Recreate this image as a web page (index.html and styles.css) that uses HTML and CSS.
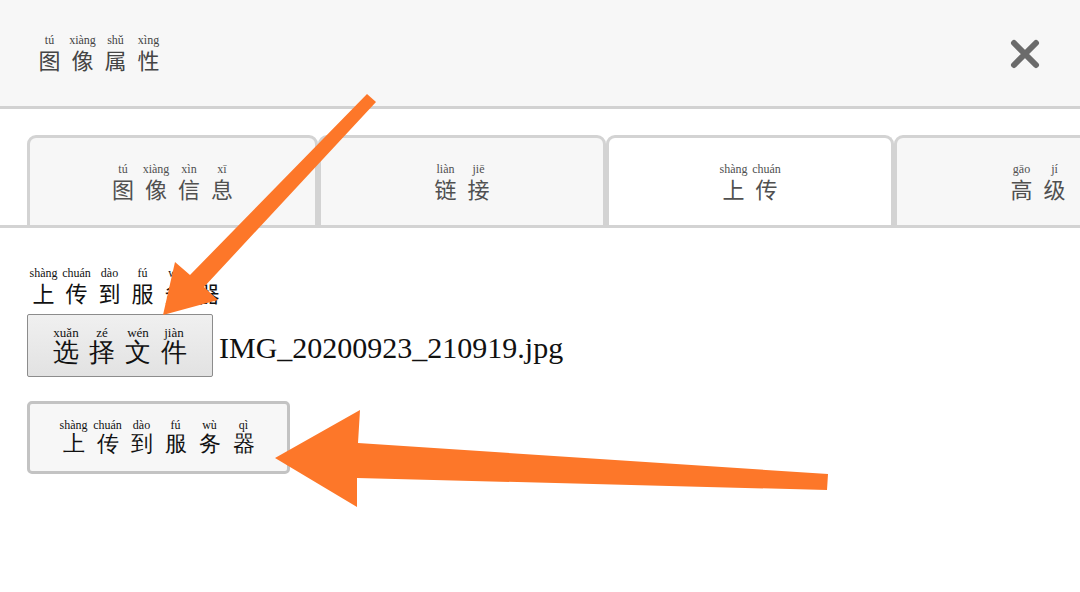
FILE: index.html
```html
<!DOCTYPE html>
<html lang="zh">
  <head>
    <meta charset="UTF-8" />
    <title>图像属性</title>
    <link rel="stylesheet" href="styles.css">
  </head>
  <body>
    <div class="dialog">
      <!-- Tiêu đề -->
      <div class="header">
        <div class="zh title">
          <span class="w"><span class="py">tú</span><span class="hz">图</span></span>
          <span class="w"><span class="py">xiàng</span><span class="hz">像</span></span>
          <span class="w"><span class="py">shǔ</span><span class="hz">属</span></span>
          <span class="w"><span class="py">xìng</span><span class="hz">性</span></span>
        </div>
        <a href="#" class="close" title="关闭">
          <svg width="30" height="30" viewBox="0 0 30 30">
            <path d="M4 4 L26 26 M26 4 L4 26" stroke="#6b6b6b" stroke-width="6" stroke-linecap="round" />
          </svg>
        </a>
      </div>

      <!-- Tab -->
      <div class="tabs">
        <div class="tab">
          <div class="zh">
            <span class="w"><span class="py">tú</span><span class="hz">图</span></span>
            <span class="w"><span class="py">xiàng</span><span class="hz">像</span></span>
            <span class="w"><span class="py">xìn</span><span class="hz">信</span></span>
            <span class="w"><span class="py">xī</span><span class="hz">息</span></span>
          </div>
        </div>
        <div class="tab">
          <div class="zh">
            <span class="w"><span class="py">liàn</span><span class="hz">链</span></span>
            <span class="w"><span class="py">jiē</span><span class="hz">接</span></span>
          </div>
        </div>
        <div class="tab active">
          <div class="zh">
            <span class="w"><span class="py">shàng</span><span class="hz">上</span></span>
            <span class="w"><span class="py">chuán</span><span class="hz">传</span></span>
          </div>
        </div>
        <div class="tab">
          <div class="zh">
            <span class="w"><span class="py">gāo</span><span class="hz">高</span></span>
            <span class="w"><span class="py">jí</span><span class="hz">级</span></span>
          </div>
        </div>
      </div>

      <!-- Nội dung tab tải lên -->
      <div class="content">
        <div class="zh label">
          <span class="w"><span class="py">shàng</span><span class="hz">上</span></span>
          <span class="w"><span class="py">chuán</span><span class="hz">传</span></span>
          <span class="w"><span class="py">dào</span><span class="hz">到</span></span>
          <span class="w"><span class="py">fú</span><span class="hz">服</span></span>
          <span class="w"><span class="py">wù</span><span class="hz">务</span></span>
          <span class="w"><span class="py">qì</span><span class="hz">器</span></span>
        </div>

        <div class="file-row">
          <button class="file-btn">
            <span class="zh">
              <span class="w"><span class="py">xuǎn</span><span class="hz">选</span></span>
              <span class="w"><span class="py">zé</span><span class="hz">择</span></span>
              <span class="w"><span class="py">wén</span><span class="hz">文</span></span>
              <span class="w"><span class="py">jiàn</span><span class="hz">件</span></span>
            </span>
          </button>
          <span class="file-name">IMG_20200923_210919.jpg</span>
        </div>

        <button class="upload-btn">
          <span class="zh">
            <span class="w"><span class="py">shàng</span><span class="hz">上</span></span>
            <span class="w"><span class="py">chuán</span><span class="hz">传</span></span>
            <span class="w"><span class="py">dào</span><span class="hz">到</span></span>
            <span class="w"><span class="py">fú</span><span class="hz">服</span></span>
            <span class="w"><span class="py">wù</span><span class="hz">务</span></span>
            <span class="w"><span class="py">qì</span><span class="hz">器</span></span>
          </span>
        </button>
      </div>
    </div>

    <!-- Mũi tên chú thích -->
    <svg class="arrows" width="1080" height="592" viewBox="0 0 1080 592">
      <polygon fill="#fd7729" points="367,94 376,102 204,287 218,300 163,315 175,262 190,275" />
      <polygon fill="#fd7729" points="275,458 360,410 358,443 828,474 827,490 357,478 357,507" />
    </svg>
  </body>
</html>
```

FILE: styles.css
```css
body {
  margin: 0;
  background: #fff;
  width: 1080px;
  height: 592px;
  overflow: hidden;
  position: relative;
  font-family: "Noto Sans CJK SC", sans-serif;
}

.dialog {
  display: flex;
  flex-direction: column;
}

/* chữ Hán + pinyin */
.zh {
  display: inline-flex;
  align-items: flex-end;
}

.zh .w {
  display: inline-flex;
  flex-direction: column;
  align-items: center;
  width: 33px;
}

.zh .py {
  font-family: "Liberation Serif", "DejaVu Serif", serif;
  font-size: 12px;
  line-height: 13px;
  white-space: nowrap;
}

.zh .hz {
  font-size: 22px;
  line-height: 24px;
}

.header {
  height: 106px;
  background: #f7f7f7;
  border-bottom: 3px solid #d2d2d2;
  display: flex;
  align-items: center;
  justify-content: space-between;
  padding: 0 40px 0 33px;
}

.title {
  color: #444;
  margin-top: -2px;
}

.close {
  display: block;
  width: 30px;
  height: 30px;
  margin-top: 2px;
}

.tabs {
  display: flex;
  margin-top: 26px;
  padding-left: 27px;
  border-bottom: 3px solid #d3d3d3;
  overflow: hidden;
}

.tab {
  flex: none;
  width: 282px;
  height: 87px;
  border: 3px solid #d3d3d3;
  border-radius: 9px 9px 0 0;
  background: #f7f7f7;
  margin-bottom: -3px;
  display: flex;
  align-items: center;
  justify-content: center;
  color: #505050;
}

.tab:first-child {
  width: 285px;
}

.tab.active {
  background: #fff;
  border-bottom-color: #fff;
}

.content {
  padding: 39px 27px 0;
  display: flex;
  flex-direction: column;
  align-items: flex-start;
}

.label {
  color: #111;
}

.file-row {
  display: flex;
  align-items: center;
  margin-top: 10px;
}

.file-btn {
  width: 186px;
  height: 63px;
  padding: 0;
  border: 1px solid #8c8c8c;
  border-radius: 2px;
  background: linear-gradient(#f0f0f0, #e2e2e2);
  display: flex;
  align-items: center;
  justify-content: center;
  color: #111;
}

.file-btn .w {
  width: 36px;
}

.file-btn .py {
  font-size: 13px;
}

.file-btn .hz {
  font-size: 26px;
  line-height: 27px;
}

.file-name {
  font-family: "Liberation Serif", serif;
  font-size: 30px;
  color: #111;
  margin-left: 6px;
  margin-top: 4px;
}

.upload-btn {
  margin-top: 24px;
  width: 263px;
  height: 73px;
  border: 3px solid #c3c3c3;
  border-radius: 5px;
  background: #f7f7f7;
  display: flex;
  align-items: center;
  justify-content: center;
  color: #111;
  padding: 0;
}

.upload-btn .w {
  width: 34px;
}

.arrows {
  position: absolute;
  top: 0;
  left: 0;
  pointer-events: none;
}
```
